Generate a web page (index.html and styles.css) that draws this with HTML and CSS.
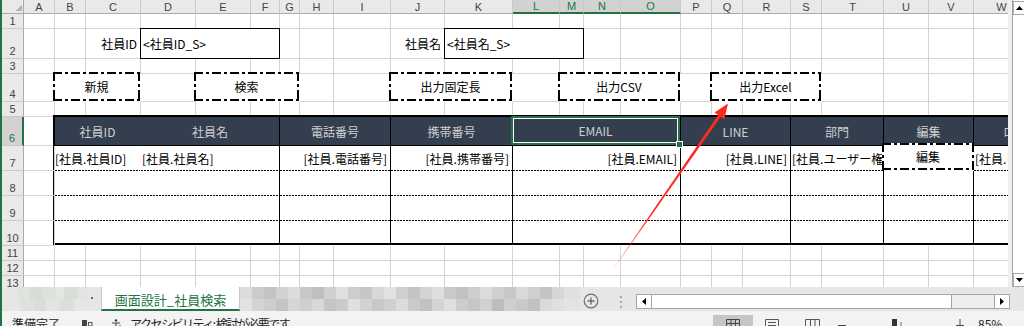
FILE: index.html
```html
<!DOCTYPE html>
<html lang="ja">
<head>
	<meta charset="UTF-8">
	<title>画面設計_社員検索</title>
	<link rel="stylesheet" href="styles.css">
</head>
<body>
	<div class="app">
		<div class="sheetarea">
			<div class="grid">
				<!-- column letters -->
				<div class="corner"></div>
				<div class="ch">A</div><div class="ch">B</div><div class="ch">C</div><div class="ch">D</div><div class="ch">E</div><div class="ch">F</div><div class="ch">G</div><div class="ch">H</div><div class="ch">I</div><div class="ch">J</div><div class="ch">K</div>
				<div class="ch sel">L</div><div class="ch sel">M</div><div class="ch sel">N</div><div class="ch sel">O</div>
				<div class="ch">P</div><div class="ch">Q</div><div class="ch">R</div><div class="ch">S</div><div class="ch">T</div><div class="ch">U</div><div class="ch">V</div><div class="ch">W</div>

				<!-- row 1 -->
				<div class="rh">1</div>
				<div class="c"></div><div class="c"></div><div class="c"></div><div class="c"></div><div class="c"></div><div class="c"></div><div class="c"></div><div class="c"></div><div class="c"></div><div class="c"></div><div class="c"></div><div class="c"></div>
				<div class="c"></div><div class="c"></div><div class="c"></div><div class="c"></div><div class="c"></div><div class="c"></div><div class="c"></div><div class="c"></div><div class="c"></div><div class="c"></div><div class="c"></div>

				<!-- row 2 : search fields -->
				<div class="rh">2</div>
				<div class="c"></div><div class="c"></div>
				<div class="lbl">社員ID</div>
				<div class="inp">&lt;社員ID_S&gt;</div>
				<div class="c"></div><div class="c"></div><div class="c"></div>
				<div class="lbl">社員名</div>
				<div class="inp">&lt;社員名_S&gt;</div>
				<div class="c"></div><div class="c"></div><div class="c"></div><div class="c"></div><div class="c"></div><div class="c"></div><div class="c"></div><div class="c"></div><div class="c"></div><div class="c"></div>

				<!-- row 3 -->
				<div class="rh">3</div>
				<div class="c"></div><div class="c"></div><div class="c"></div><div class="c"></div><div class="c"></div><div class="c"></div><div class="c"></div><div class="c"></div><div class="c"></div><div class="c"></div><div class="c"></div><div class="c"></div>
				<div class="c"></div><div class="c"></div><div class="c"></div><div class="c"></div><div class="c"></div><div class="c"></div><div class="c"></div><div class="c"></div><div class="c"></div><div class="c"></div><div class="c"></div>

				<!-- row 4 : buttons -->
				<div class="rh">4</div>
				<div class="c"></div>
				<div class="btn b2">新規</div>
				<div class="c"></div>
				<div class="btn b3">検索</div>
				<div class="c"></div><div class="c"></div>
				<div class="btn b2">出力固定長</div>
				<div class="c"></div>
				<div class="btn b3">出力CSV</div>
				<div class="c"></div>
				<div class="btn b3">出力Excel</div>
				<div class="c"></div><div class="c"></div><div class="c"></div><div class="c"></div>

				<!-- row 5 -->
				<div class="rh">5</div>
				<div class="c"></div><div class="c"></div><div class="c"></div><div class="c"></div><div class="c"></div><div class="c"></div><div class="c"></div><div class="c"></div><div class="c"></div><div class="c"></div><div class="c"></div><div class="c"></div>
				<div class="c"></div><div class="c"></div><div class="c"></div><div class="c"></div><div class="c"></div><div class="c"></div><div class="c"></div><div class="c"></div><div class="c"></div><div class="c"></div><div class="c"></div>

				<!-- rows 6-10 : result list -->
				<div class="rh sel">6</div><div class="c"></div>
				<div class="tbl">
					<div class="th nb">社員ID</div>
					<div class="th">社員名</div>
					<div class="th">電話番号</div>
					<div class="th">携帯番号</div>
					<div class="th sel">EMAIL<span class="handle"></span></div>
					<div class="th">LINE</div>
					<div class="th">部門</div>
					<div class="th">編集</div>
					<div class="th last">ロール</div>

					<div class="td nb first">[社員.社員ID]</div>
					<div class="td">[社員.社員名]</div>
					<div class="td r">[社員.電話番号]</div>
					<div class="td r">[社員.携帯番号]</div>
					<div class="td r">[社員.EMAIL]</div>
					<div class="td r">[社員.LINE]</div>
					<div class="td">[社員.ユーザー権限]</div>
					<div class="td edit">編集</div>
					<div class="td last">[社員.ロール]</div>

					<div class="td nb"></div><div class="td"></div><div class="td"></div><div class="td"></div><div class="td"></div><div class="td"></div><div class="td"></div><div class="td"></div><div class="td last"></div>
					<div class="td nb"></div><div class="td"></div><div class="td"></div><div class="td"></div><div class="td"></div><div class="td"></div><div class="td"></div><div class="td"></div><div class="td last"></div>
					<div class="td nb end"></div><div class="td end"></div><div class="td end"></div><div class="td end"></div><div class="td end"></div><div class="td end"></div><div class="td end"></div><div class="td end"></div><div class="td last end"></div>
				</div>
				<div class="rh">7</div><div class="c"></div>
				<div class="rh">8</div><div class="c"></div>
				<div class="rh">9</div><div class="c"></div>
				<div class="rh">10</div><div class="c"></div>

				<!-- row 11 -->
				<div class="rh">11</div>
				<div class="c"></div><div class="c"></div><div class="c"></div><div class="c"></div><div class="c"></div><div class="c"></div><div class="c"></div><div class="c"></div><div class="c"></div><div class="c"></div><div class="c"></div><div class="c"></div>
				<div class="c"></div><div class="c"></div><div class="c"></div><div class="c"></div><div class="c"></div><div class="c"></div><div class="c"></div><div class="c"></div><div class="c"></div><div class="c"></div><div class="c"></div>

				<!-- row 12 -->
				<div class="rh">12</div>
				<div class="c"></div><div class="c"></div><div class="c"></div><div class="c"></div><div class="c"></div><div class="c"></div><div class="c"></div><div class="c"></div><div class="c"></div><div class="c"></div><div class="c"></div><div class="c"></div>
				<div class="c"></div><div class="c"></div><div class="c"></div><div class="c"></div><div class="c"></div><div class="c"></div><div class="c"></div><div class="c"></div><div class="c"></div><div class="c"></div><div class="c"></div>

				<!-- row 13 -->
				<div class="rh">13</div>
				<div class="c"></div><div class="c"></div><div class="c"></div><div class="c"></div><div class="c"></div><div class="c"></div><div class="c"></div><div class="c"></div><div class="c"></div><div class="c"></div><div class="c"></div><div class="c"></div>
				<div class="c"></div><div class="c"></div><div class="c"></div><div class="c"></div><div class="c"></div><div class="c"></div><div class="c"></div><div class="c"></div><div class="c"></div><div class="c"></div><div class="c"></div>
			</div>

			<div class="vscroll">
				<div class="vtrack">
					<div class="vbtn top"><svg width="7" height="4"><polygon points="0,4 3.5,0 7,4" fill="#000"/></svg></div>
					<div class="vbtn"><svg width="7" height="4"><polygon points="0,0 7,0 3.5,4" fill="#000"/></svg></div>
				</div>
			</div>
		</div>

		<div class="tabbar">
			<div class="mos-a"></div>
			<div class="tab">画面設計_社員検索</div>
			<div class="mos-b"></div>
			<svg class="addsheet" width="16" height="16"><circle cx="8" cy="8" r="6.8" fill="none" stroke="#6e6e6e" stroke-width="1.2"/><path d="M8 4.5v7M4.5 8h7" stroke="#6e6e6e" stroke-width="1.4"/></svg>
			<svg class="more" width="3" height="12"><rect x="1" y="0" width="2" height="2" fill="#a6a6a6"/><rect x="1" y="5" width="2" height="2" fill="#a6a6a6"/><rect x="1" y="10" width="2" height="2" fill="#a6a6a6"/></svg>
			<div class="hscroll">
				<div class="hbtn"><svg width="4" height="7"><polygon points="4,0 4,7 0,3.5" fill="#000"/></svg></div>
				<div class="thumb"></div>
				<div class="htrack"></div>
				<div class="hbtn"><svg width="4" height="7"><polygon points="0,0 4,3.5 0,7" fill="#000"/></svg></div>
			</div>
		</div>

		<div class="status">
			<span>準備完了</span>
			<svg class="macro" width="11" height="8"><rect x="0" y="1" width="5" height="7" fill="#444"/><rect x="6.5" y="3.5" width="3.5" height="3.5" fill="none" stroke="#555"/></svg>
			<svg class="acc" width="12" height="9"><circle cx="5" cy="1.5" r="1.3" fill="#444"/><path d="M1 4h8M5 4v5M9 6v3M7.5 7.5h3" stroke="#444" stroke-width="1.1" fill="none"/></svg>
			<span class="acc-text">アクセシビリティ: 検討が必要です</span>
			<div class="views">
				<div class="vw-on"><svg width="14" height="9"><path d="M.5 .5h13v9M.5 .5v9M.5 4.5h13M5 .5v9M9.5 .5v9" stroke="#444" fill="none"/></svg></div>
				<svg class="vw" width="14" height="9"><path d="M.5 .5h13v9M.5 .5v9M3 3.5h8M3 6.5h8" stroke="#555" fill="none"/></svg>
				<svg class="vw2" width="15" height="9"><path d="M.5 .5h14v9M.5 .5v9M5.5 .5v9M10 .5v9" stroke="#555" fill="none"/></svg>
				<svg class="zoombar" width="127" height="9"><path d="M0 6.5h8" stroke="#444"/><rect x="54" y="0" width="5" height="9" fill="#333"/><path d="M63 3v6" stroke="#666"/><path d="M122 0v9M118 6.5h8" stroke="#444"/></svg>
				<span class="pct">85%</span>
			</div>
		</div>
	</div>

	<svg class="arrow" width="1024" height="326" viewBox="0 0 1024 326">
		<defs>
			<linearGradient id="fade" gradientUnits="userSpaceOnUse" x1="614" y1="268" x2="652" y2="214">
				<stop offset="0" stop-color="#ff2a1f" stop-opacity="0.12"/>
				<stop offset="1" stop-color="#ff2a1f"/>
			</linearGradient>
		</defs>
		<polygon points="614.3,268.2 722.5,114.3 719.9,112.5 613.7,267.8" fill="url(#fade)"/>
		<polygon points="728,103.5 724.4,119.2 714.5,112.4" fill="#ff2a1f"/>
	</svg>
</body>
</html>
```

FILE: styles.css
```css
:root{
	--dash-h: repeating-linear-gradient(90deg, #000 0 9px, transparent 9px 12px, #000 12px 15px, transparent 15px 18px);
	--dash-v: repeating-linear-gradient(180deg, #000 0 9px, transparent 9px 12px, #000 12px 15px, transparent 15px 18px);
	--dot: repeating-linear-gradient(90deg, #000 0 2px, transparent 2px 3px);
}
*{
	margin: 0;
	padding: 0;
	box-sizing: border-box;
}
body{
	position: relative;
	width: 1024px;
	height: 326px;
	overflow: hidden;
	background: #fff;
	font-family: "Noto Sans CJK JP", "Liberation Sans", sans-serif;
	font-size: 12px;
	color: #000;
}
.app{
	height: 326px;
	border-left: 2px solid #217346;
	display: flex;
	flex-direction: column;
}

/* sheet */
.sheetarea{
	flex: none;
	height: 287px;
	display: flex;
	overflow: hidden;
}
.grid{
	flex: none;
	width: 1006px;
	overflow: hidden;
	display: grid;
	grid-template-columns: 22px 31px 31px 55px 55px 55px 29px 20px 34px 57px 54px 68px 47px 24px 37px 60px 31px 31px 48px 31px 62px 45px 45px 56px;
	grid-template-rows: 14px 15px 30px 15px 28px 15px 29px 25px 25px 25px 25px 15px 15px 15px;
}
.corner{
	background: linear-gradient(135deg, transparent 50%, #b5b5b5 50%) 13px 4px / 7px 7px no-repeat #e9e9e9;
	border-right: 1px solid #ababab;
	border-bottom: 1px solid #ababab;
}
.ch{
	background: #e9e9e9;
	border-right: 1px solid #c9c9c9;
	border-bottom: 1px solid #ababab;
	display: flex;
	align-items: center;
	justify-content: center;
	font-family: "Liberation Sans", sans-serif;
	font-size: 11px;
	line-height: 12px;
	color: #444;
}
.ch.sel{
	background: #d2d2d2;
	color: #217346;
	border-bottom: 2px solid #217346;
}
.rh{
	background: #e9e9e9;
	border-right: 1px solid #ababab;
	border-bottom: 1px solid #c9c9c9;
	display: flex;
	align-items: flex-end;
	justify-content: center;
	font-family: "Liberation Sans", sans-serif;
	font-size: 11px;
	line-height: 12px;
	padding-bottom: 1px;
	color: #444;
}
.rh.sel{
	background: #d2d2d2;
	color: #217346;
	border-right: 2px solid #217346;
}
.c,
.lbl{
	border-right: 1px solid #d4d4d4;
	border-bottom: 1px solid #d4d4d4;
}
.lbl{
	display: flex;
	align-items: center;
	justify-content: flex-end;
	padding-right: 3px;
	white-space: nowrap;
}
.inp{
	grid-column: span 3;
	margin: -1px 0 0 -1px;
	border: 1px solid #000;
	background: #fff;
	display: flex;
	align-items: center;
	padding-left: 2px;
	white-space: nowrap;
	overflow: hidden;
}
.btn,
.td.edit{
	background:
		var(--dash-h) top / 100% 2px no-repeat,
		var(--dash-h) bottom / 100% 2px no-repeat,
		var(--dash-v) left / 2px 100% no-repeat,
		var(--dash-v) right / 2px 100% no-repeat,
		#fff;
	display: flex;
	align-items: center;
	justify-content: center;
	white-space: nowrap;
}
.btn{
	margin: -2px 1px 1px -2px;
}
.b2{
	grid-column: span 2;
}
.b3{
	grid-column: span 3;
}

/* list table */
.tbl{
	grid-column: span 22;
	grid-row: span 5;
	margin: -2px 0 1px -2px;
	border: 2px solid #000;
	border-right: 0;
	background: #fff;
	display: grid;
	grid-template-columns: 86px 139px 111px 122px 168px 110px 93px 90px 1fr;
	grid-template-rows: 29px 25px 25px 25px 1fr;
}
.th{
	background: #333f4f;
	color: #cfcfcf;
	border-right: 1px solid #000;
	border-bottom: 1px solid #000;
	display: flex;
	align-items: center;
	justify-content: center;
	white-space: nowrap;
}
.th.nb{
	border-right-color: transparent;
}
.th.last{
	border-right: 0;
	justify-content: flex-start;
	padding-left: 29px;
	overflow: hidden;
}
.th.sel{
	position: relative;
	margin: -1px 0 0 -2px;
	box-shadow: inset 0 0 0 2px #217346, inset 0 0 0 3px #fff;
}
.handle{
	position: absolute;
	right: -3px;
	bottom: -3px;
	width: 7px;
	height: 7px;
	background: #217346;
	border: 1px solid #fff;
}
.td{
	border-right: 1px solid #000;
	background: var(--dot) bottom / 100% 1px no-repeat;
	display: flex;
	align-items: center;
	padding: 0 3px 1px 1px;
	white-space: nowrap;
	overflow: hidden;
}
.td.nb{
	border-right-color: transparent;
}
.td.first{
	padding-left: 0;
}
.td.r{
	justify-content: flex-end;
}
.td.last{
	border-right: 0;
}
.td.end{
	background: none;
}
.td.edit{
	margin: -3px 0 1px -2px;
	border-right: 0;
	padding: 0;
}

/* vertical scroll bar */
.vscroll{
	flex: none;
	width: 16px;
	background: #f0f0f0;
	padding-left: 4px;
}
.vtrack{
	height: 100%;
	background: #fff;
	border-left: 1px solid #a6a6a6;
	display: flex;
	flex-direction: column;
	justify-content: space-between;
}
.vbtn{
	height: 14px;
	border: 1px solid #ababab;
	border-right: 0;
	display: flex;
	align-items: center;
	justify-content: center;
}
.vbtn.top{
	margin-top: 1px;
}

/* sheet tabs */
.tabbar{
	flex: none;
	height: 24px;
	background: #e6e6e6;
	display: flex;
	align-items: flex-start;
}
.mos-a{
	width: 99px;
	height: 24px;
	background:
		linear-gradient(#666, #666) 89px 10px / 2px 2px no-repeat,
		linear-gradient(90deg, #e6e6e6 0 16px, #dfe3df 16px 28px, #d5dbd5 28px 40px, #dce1dc 40px 54px, #e3e6e3 54px 62px, #d8ddd8 62px 76px, #e1e4e1 76px 86px, #e6e6e6 86px) top / 100% 12px no-repeat,
		linear-gradient(90deg, #e6e6e6 0 18px, #dde2dd 18px 32px, #d9ded9 32px 44px, #e2e5e2 44px 58px, #dadfda 58px 72px, #e6e6e6 72px) bottom / 100% 12px no-repeat;
}
.tab{
	width: 139px;
	height: 24px;
	background: #fff;
	color: #217346;
	font-size: 13px;
	border-left: 1px solid #c6c6c6;
	border-right: 1px solid #c6c6c6;
	border-bottom: 2px solid #217346;
	padding-top: 3px;
	display: flex;
	align-items: center;
	justify-content: center;
	white-space: nowrap;
}
.mos-b{
	width: 340px;
	height: 24px;
	background:
		linear-gradient(90deg, #dcdcdc 0 12px, #cbcbcb 12px 24px, #c3c3c3 24px 36px, #d2d2d2 36px 48px, #dcdcdc 48px 60px, #c8c8c8 60px 72px, #bfbfbf 72px 84px, #d0d0d0 84px 96px, #e0e0e0 96px 108px, #cdcdcd 108px 120px, #c6c6c6 120px 132px, #d8d8d8 132px 144px, #e2e2e2 144px 156px, #cfcfcf 156px 168px, #c4c4c4 168px 180px, #d3d3d3 180px 192px, #dedede 192px 204px, #c9c9c9 204px 216px, #c1c1c1 216px 228px, #cecece 228px 240px, #dbdbdb 240px 252px, #d0d0d0 252px 264px, #c7c7c7 264px 276px, #d9d9d9 276px 288px, #cfcfcf 288px 300px, #c4c4c4 300px 312px, #d6d6d6 312px 324px, #e0e0e0 324px) top / 100% 12px no-repeat,
		linear-gradient(90deg, #e2e2e2 0 12px, #d4d4d4 12px 24px, #cdcdcd 24px 36px, #c4c4c4 36px 48px, #d6d6d6 48px 60px, #cfcfcf 60px 72px, #d8d8d8 72px 84px, #c5c5c5 84px 96px, #cbcbcb 96px 108px, #e0e0e0 108px 120px, #d2d2d2 120px 132px, #c8c8c8 132px 144px, #d0d0d0 144px 156px, #dcdcdc 156px 168px, #cacaca 168px 180px, #c2c2c2 180px 192px, #d4d4d4 192px 204px, #dfdfdf 204px 216px, #cdcdcd 216px 228px, #c6c6c6 228px 240px, #d1d1d1 240px 252px, #bdbdbd 252px 264px, #cfcfcf 264px 276px, #c9c9c9 276px 288px, #c2c2c2 288px 300px, #dadada 300px 312px, #dde0dd 312px 324px, #e4e4e4 324px) bottom / 100% 12px no-repeat;
}
.addsheet{
	margin: 6px 0 0 3px;
}
.more{
	margin: 9px 0 0 20px;
}
.hscroll{
	margin: 7px 0 0 14px;
	width: 374px;
	height: 15px;
	border: 1px solid #a6a6a6;
	display: flex;
}
.hbtn{
	width: 14px;
	background: #fff;
	display: flex;
	align-items: center;
	justify-content: center;
}
.thumb{
	width: 301px;
	background: #fff;
	border-left: 1px solid #a6a6a6;
	border-right: 1px solid #a6a6a6;
}
.htrack{
	flex: 1;
	background: #ededed;
	border-right: 1px solid #a6a6a6;
}

/* status bar */
.status{
	flex: none;
	height: 22px;
	background: #f3f3f3;
	padding: 6px 0 0 10px;
	display: flex;
	align-items: flex-start;
	font-size: 12px;
	line-height: 14px;
	color: #222;
	white-space: nowrap;
}
.macro{
	margin: 2px 0 0 22px;
}
.acc{
	margin: 2px 0 0 18px;
}
.acc-text{
	margin-left: 7px;
	letter-spacing: -1.5px;
}
.views{
	margin-left: auto;
	display: flex;
	align-items: flex-start;
}
.vw-on{
	width: 40px;
	height: 20px;
	margin-top: -2px;
	padding-top: 4px;
	background: #c6c6c6;
	display: flex;
	justify-content: center;
}
.vw{
	margin: 2px 0 0 12px;
}
.vw2{
	margin: 2px 0 0 26px;
}
.zoombar{
	margin: 2px 0 0 18px;
}
.pct{
	width: 46px;
	margin-left: 13px;
}

.arrow{
	position: absolute;
	left: 0;
	top: 0;
	pointer-events: none;
}
```
